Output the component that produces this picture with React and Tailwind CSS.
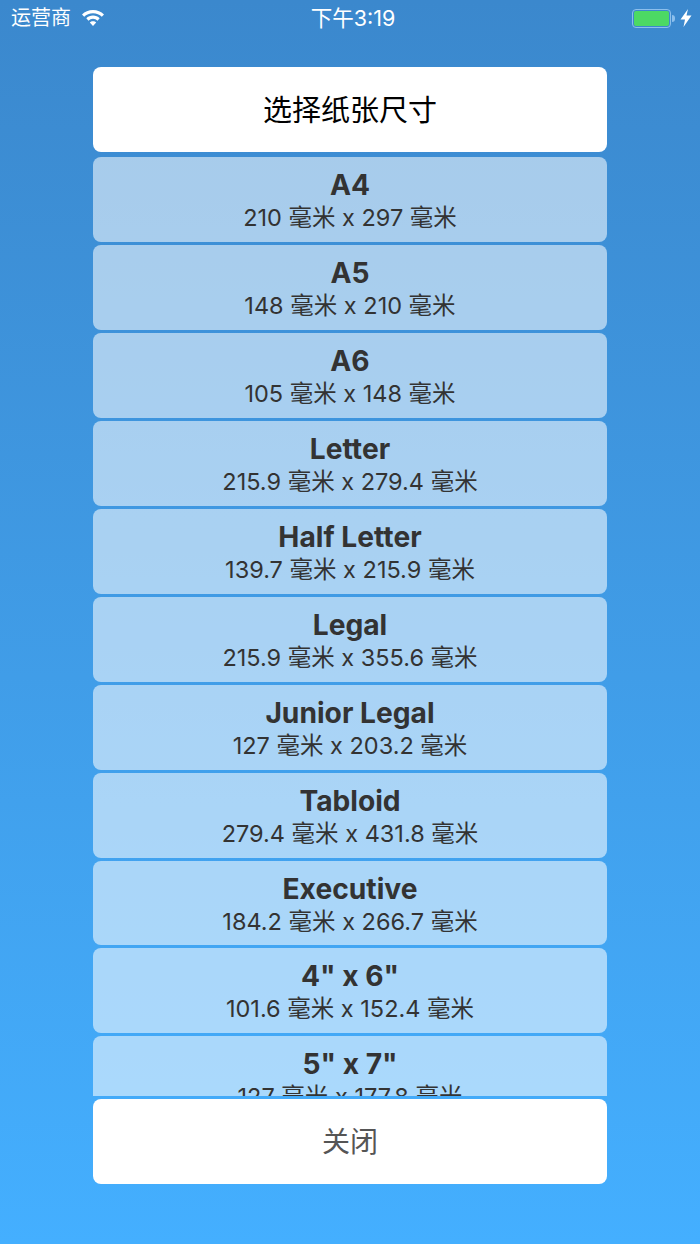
const papers = [
  ['A4', '210 毫米 x 297 毫米'],
  ['A5', '148 毫米 x 210 毫米'],
  ['A6', '105 毫米 x 148 毫米'],
  ['Letter', '215.9 毫米 x 279.4 毫米'],
  ['Half Letter', '139.7 毫米 x 215.9 毫米'],
  ['Legal', '215.9 毫米 x 355.6 毫米'],
  ['Junior Legal', '127 毫米 x 203.2 毫米'],
  ['Tabloid', '279.4 毫米 x 431.8 毫米'],
  ['Executive', '184.2 毫米 x 266.7 毫米'],
  ['4" x 6"', '101.6 毫米 x 152.4 毫米'],
  ['5" x 7"', '127 毫米 x 177.8 毫米'],
]

function Wifi() {
  return (
    <svg width="24" height="18" viewBox="0 0 24 18" fill="white">
      <path d="M12 1C7.6 1 3.8 2.7 1 5.400l2.200 2.400C5.400 5.600 8.500 4.200 12 4.200s6.600 1.400 8.800 3.600L23 5.400C20.200 2.700 16.400 1 12 1z" />
      <path d="M12 6.600c-2.600 0-5 1-6.700 2.700l2.200 2.400c1.200-1.100 2.800-1.900 4.500-1.900s3.300.8 4.500 1.900l2.200-2.400C17 7.600 14.600 6.600 12 6.600z" />
      <path d="M12 12.200c-1.300 0-2.400.5-3.200 1.300L12 17l3.200-3.500c-.8-.8-1.900-1.300-3.200-1.300z" />
    </svg>
  )
}

function Battery() {
  return (
    <div className="flex items-center gap-[1px]">
      <div className="w-[39px] h-[19px] rounded-[4px] border-[1.5px] border-[#8cbfec] p-[1px]">
        <div className="w-full h-full rounded-[2px] bg-[#4cd964]" />
      </div>
      <div className="w-[3px] h-[7px] rounded-r-[3px] bg-[#8cbfec]" />
    </div>
  )
}

function Bolt() {
  return (
    <svg width="12" height="18" viewBox="0 0 12 18" fill="white">
      <path d="M8 0 0.500 10.500H5L3.500 18l8-11.500H6.500z" />
    </svg>
  )
}

export default function App() {
  return (
    <div
      className="w-[700px] h-[1244px] overflow-hidden flex flex-col bg-gradient-to-b from-[#3b88cd] to-[#44afff] text-[#333333]"
      style={{ fontFamily: 'Inter, "Noto Sans CJK SC", sans-serif' }}
    >
      <div className="h-[67px] shrink-0 pl-[11px] pr-[8px] pt-[6px]">
        <div className="h-[24px] flex items-center justify-between text-white relative">
          <div className="flex items-center gap-[10px]">
            <span className="text-[20px] leading-[24px]">运营商</span>
            <Wifi />
          </div>
          <span className="absolute left-[297px] w-[90px] text-center text-[21.5px] leading-[24px] whitespace-nowrap">下午3:19</span>
          <div className="flex items-center gap-[5px]">
            <Battery />
            <Bolt />
          </div>
        </div>
      </div>

      <div className="w-[514px] mx-auto flex flex-col">
        <div className="h-[85px] shrink-0 rounded-[8px] bg-white flex items-center justify-center text-[29px] pt-[2px] text-black">
          选择纸张尺寸
        </div>
        <div className="h-[939px] mt-[5px] overflow-hidden flex flex-col gap-[3px]">
          {papers.map(([name, size]) => (
            <div key={name} className="h-[84.94px] shrink-0 rounded-[8px] bg-white/55 flex flex-col items-center pt-[12px]">
              <div className="text-[28.2px] leading-[33px] font-bold">{name}</div>
              <div className="text-[23.5px] leading-[28px] mt-[2px]">{size}</div>
            </div>
          ))}
        </div>
        <div className="h-[85px] shrink-0 mt-[3px] rounded-[8px] bg-white flex items-center justify-center text-[28px] text-[#555555]">
          关闭
        </div>
      </div>
    </div>
  )
}
